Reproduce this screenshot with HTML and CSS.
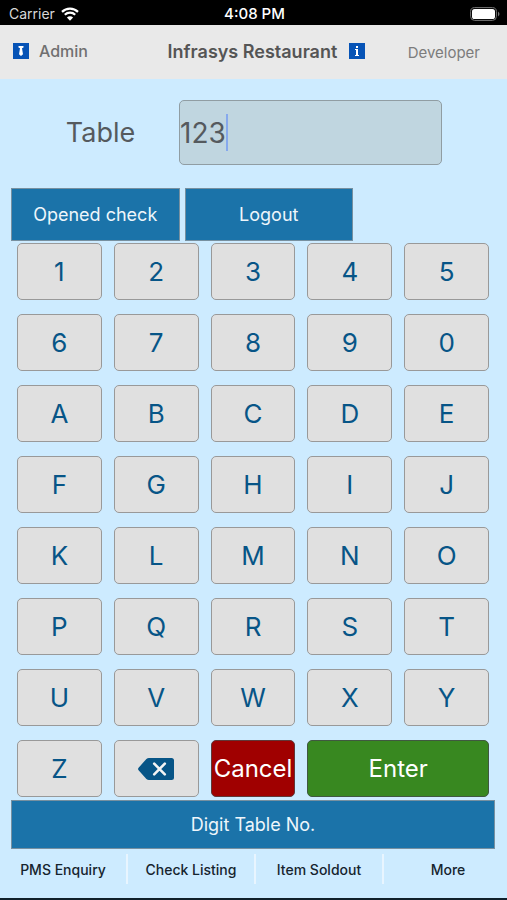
FILE: index.html
```html
<!DOCTYPE html>
<html lang="en">
<head>
<meta charset="utf-8">
<meta name="viewport" content="width=device-width, initial-scale=1">
<title>Infrasys Restaurant</title>
<link rel="stylesheet" href="styles.css">
</head>
<body>
<div class="status">
  <div class="carrier">
    <span>Carrier</span>
    <svg class="wifi" viewBox="0 0 18 14" aria-hidden="true">
      <path d="M1 4.9a11.4 11.4 0 0 1 16 0M3.8 7.8a7.4 7.4 0 0 1 10.4 0" fill="none" stroke="#fff" stroke-width="2.2"/>
      <path d="M9 13.8 5.900 10.600a4.400 4.400 0 0 1 6.200 0z" fill="#fff"/>
    </svg>
  </div>
  <span class="clock">4:08 PM</span>
  <svg class="battery" viewBox="0 0 30 14" aria-hidden="true">
    <rect x="0.600" y="0.600" width="25.800" height="12.800" rx="4" fill="none" stroke="#777" stroke-width="1"/>
    <rect x="2" y="2" width="23" height="10" rx="2.600" fill="#fff"/>
    <path d="M28 4.500q3 2.500 0 5z" fill="#777"/>
  </svg>
</div>
<header class="header">
  <div class="user">
    <svg class="badge" viewBox="0 0 16 16" aria-hidden="true">
      <rect width="16" height="16" fill="#0653b6"/>
      <path d="M5.500 3h5v1.500L9 5.200l1 6L8 13l-2-1.800 1-6-1.500-.7z" fill="#fff"/>
    </svg>
    <span>Admin</span>
  </div>
  <h1 class="title">
    Infrasys Restaurant
    <svg class="badge" viewBox="0 0 16 16" aria-hidden="true">
      <rect width="16" height="16" fill="#0653b6"/>
      <path d="M7 3h2v2H7zM6 6h3v6h1v1H6v-1h1V7H6z" fill="#fff"/>
    </svg>
  </h1>
  <span class="role">Developer</span>
</header>
<main class="main">
  <div class="entry">
    <label class="entry-label" for="table">Table</label>
    <div class="field">
      <input class="entry-input" id="table" type="text" value="123">
      <span class="caret"></span>
    </div>
  </div>
  <div class="actions">
    <button class="bar" type="button">Opened check</button>
    <button class="bar" type="button">Logout</button>
  </div>
  <div class="keys">
    <button class="key" type="button">1</button>
    <button class="key" type="button">2</button>
    <button class="key" type="button">3</button>
    <button class="key" type="button">4</button>
    <button class="key" type="button">5</button>
    <button class="key" type="button">6</button>
    <button class="key" type="button">7</button>
    <button class="key" type="button">8</button>
    <button class="key" type="button">9</button>
    <button class="key" type="button">0</button>
    <button class="key" type="button">A</button>
    <button class="key" type="button">B</button>
    <button class="key" type="button">C</button>
    <button class="key" type="button">D</button>
    <button class="key" type="button">E</button>
    <button class="key" type="button">F</button>
    <button class="key" type="button">G</button>
    <button class="key" type="button">H</button>
    <button class="key" type="button">I</button>
    <button class="key" type="button">J</button>
    <button class="key" type="button">K</button>
    <button class="key" type="button">L</button>
    <button class="key" type="button">M</button>
    <button class="key" type="button">N</button>
    <button class="key" type="button">O</button>
    <button class="key" type="button">P</button>
    <button class="key" type="button">Q</button>
    <button class="key" type="button">R</button>
    <button class="key" type="button">S</button>
    <button class="key" type="button">T</button>
    <button class="key" type="button">U</button>
    <button class="key" type="button">V</button>
    <button class="key" type="button">W</button>
    <button class="key" type="button">X</button>
    <button class="key" type="button">Y</button>
    <button class="key" type="button">Z</button>
    <button class="key" type="button" aria-label="Backspace">
      <svg class="erase" viewBox="0 0 36 22" aria-hidden="true">
        <path d="M11 0h22.500A2.500 2.500 0 0 1 36 2.500v17a2.500 2.500 0 0 1-2.500 2.500H11q-1.500 0-2.600-1L.8 12.600q-1.500-1.600 0-3.200L8.400 1Q9.500 0 11 0z" fill="#075587"/>
        <path d="m16.200 5.700 10.600 10.600m0-10.600L16.200 16.300" stroke="#f4f4f4" stroke-width="2.600" stroke-linecap="round"/>
      </svg>
    </button>
    <button class="key cancel" type="button">Cancel</button>
    <button class="key enter" type="button">Enter</button>
  </div>
  <button class="bar mode" type="button">Digit Table No.</button>
</main>
<nav class="nav">
  <a class="nav-item" href="#pms">PMS Enquiry</a>
  <a class="nav-item" href="#checks">Check Listing</a>
  <a class="nav-item" href="#soldout">Item Soldout</a>
  <a class="nav-item" href="#more">More</a>
</nav>
</body>
</html>
```
FILE: styles.css
```css
* {
  box-sizing: border-box;
}

body {
  margin: 0;
  min-height: 100vh;
  display: flex;
  flex-direction: column;
  background: #cdebff;
  border-bottom: 2px solid #10202b;
  font-family: Inter, "Liberation Sans", sans-serif;
}

button,
input {
  margin: 0;
  padding: 0;
  font: inherit;
}

.status {
  display: grid;
  grid-template-columns: 1fr auto 1fr;
  align-items: center;
  height: 25px;
  padding: 2px 7px 0 9px;
  background: #000;
  color: #fff;
  font-size: 14px;
}

.carrier {
  display: flex;
  align-items: center;
  gap: 6px;
  color: #d8d8d8;
}

.wifi {
  width: 18px;
  height: 14px;
}

.clock {
  font-size: 15px;
  font-weight: 500;
}

.battery {
  width: 30px;
  height: 14px;
  justify-self: end;
}

.header {
  display: grid;
  grid-template-columns: 155fr auto 115fr;
  align-items: center;
  height: 54px;
  padding: 0 27px 2px 13px;
  background: #e9e9e9;
}

.user {
  display: flex;
  align-items: center;
  gap: 10px;
  color: #707070;
  font-size: 16px;
  font-weight: 500;
}

.badge {
  width: 16px;
  height: 16px;
  flex: none;
}

.title {
  display: flex;
  align-items: center;
  gap: 12px;
  margin: 0;
  color: #555;
  font-size: 18px;
  font-weight: 600;
}

.role {
  justify-self: end;
  padding-top: 2px;
  color: #7c7c7c;
  font-size: 15px;
}

.main {
  display: flex;
  flex-direction: column;
}

.entry {
  display: flex;
  align-items: center;
  padding: 21px 65px 23px 22px;
  color: #555a5e;
  font-size: 28px;
}

.entry-label {
  flex: 157;
  font-size: 27px;
  text-align: center;
}

.field {
  position: relative;
  flex: 263;
}

.entry-input {
  display: block;
  width: 100%;
  height: 65px;
  border: 1px solid #909da3;
  border-radius: 5px;
  background: #c0d6e0;
  color: inherit;
}

.caret {
  position: absolute;
  top: 14px;
  left: 47px;
  width: 2px;
  height: 37px;
  background: #86a9ed;
}

.actions {
  display: grid;
  grid-template-columns: 1fr 1fr;
  gap: 5px;
  padding: 0 154px 0 11px;
}

.bar {
  height: 53px;
  border: 1px solid #7790a0;
  background: #1b73a9;
  color: #eef6fb;
  font-size: 18px;
}

.keys {
  display: grid;
  grid-template-columns: repeat(5, minmax(0, 1fr));
  grid-auto-rows: 57px;
  gap: 14px 12px;
  padding: 2px 18px 3px 17px;
}

.key {
  display: flex;
  align-items: center;
  justify-content: center;
  border: 1px solid #999;
  border-radius: 5px;
  background: #e0e0e0;
  color: #075587;
  font-size: 26px;
}

.erase {
  width: 36px;
  height: 22px;
}

.cancel {
  border-color: #603838;
  background: #a00000;
  color: #fff;
  font-size: 24px;
}

.enter {
  grid-column: span 2;
  border-color: #405840;
  background: #388820;
  color: #fff;
  font-size: 24px;
}

.mode {
  height: 49px;
  margin: 0 12px 0 11px;
}

.nav {
  display: grid;
  grid-template-columns: 128fr 128fr 128fr 123fr;
  padding-top: 5px;
}

.nav-item {
  display: flex;
  align-items: center;
  justify-content: center;
  height: 30px;
  border-right: 2px solid #e8f5ff;
  color: #16242e;
  font-size: 14px;
  font-weight: 500;
  text-decoration: none;
}

.nav-item:last-child {
  padding-left: 5px;
  border-right: 0;
}
```
